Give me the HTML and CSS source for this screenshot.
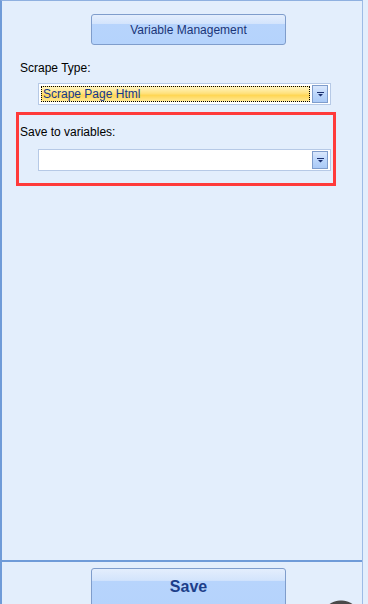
FILE: index.html
```html
<!DOCTYPE html>
<html lang="en">
<head>
  <meta charset="UTF-8" />
  <title>Scrape Settings</title>
  <link rel="stylesheet" href="styles.css">
</head>
<body>
  <div class="panel">
    <div class="content">
      <button class="ribbon-btn var-btn">Variable Management</button>

      <div class="field-label">Scrape Type:</div>
      <div class="combo">
        <div class="combo-value selected"><span>Scrape Page Html</span></div>
        <div class="combo-arrow">
          <svg width="7" height="5" viewBox="0 0 7 5"><path d="M0 0h7v1H0z M1 2h5L3.5 4.5z" fill="#1b2f6e"/></svg>
        </div>
      </div>

      <div class="highlight">
        <div class="field-label">Save to variables:</div>
        <div class="combo">
          <div class="combo-value"></div>
          <div class="combo-arrow">
            <svg width="7" height="5" viewBox="0 0 7 5"><path d="M0 0h7v1H0z M1 2h5L3.5 4.5z" fill="#1b2f6e"/></svg>
          </div>
        </div>
      </div>
    </div>

    <div class="footer">
      <button class="ribbon-btn save-btn">Save</button>
    </div>
  </div>
  <div class="corner-dot"></div>
</body>
</html>
```

FILE: styles.css
```css
* {
  margin: 0;
  padding: 0;
  box-sizing: border-box;
}

body {
  width: 368px;
  height: 604px;
  overflow: hidden;
  background: #e3eefc;
  font-family: "Liberation Sans", Arial, sans-serif;
  position: relative;
}

.panel {
  width: 363px;
  height: 604px;
  display: flex;
  flex-direction: column;
  border-left: 2px solid #6f9bd8;
  border-top: 1px solid #8fb0e0;
  border-right: 1px solid #9dbbe6;
  background: #e3eefc;
}

.content {
  flex: 1;
  padding: 13px 0 0 14px;
}

/* office style buttons */
.ribbon-btn {
  display: block;
  width: 195px;
  border: 1px solid #7f9dcc;
  border-radius: 3px;
  background: linear-gradient(to bottom, #e4eefd 0%, #d3e4fc 30%, #b7d4fc 32%, #b5d3fc 100%);
  color: #1a3578;
  font-family: "Liberation Sans", Arial, sans-serif;
  cursor: pointer;
}

.var-btn {
  margin-left: 75px;
  height: 31px;
  font-size: 12px;
}

.field-label {
  margin: 16px 0 0 4px;
  font-size: 12px;
  line-height: 14px;
  color: #000;
}

.combo {
  display: flex;
  align-items: center;
  flex-shrink: 0;
  width: 293px;
  height: 22px;
  margin: 8px 0 0 22px;
  padding: 2px;
  border: 1px solid #b6c9e6;
  background: #fff;
}

.combo-value {
  flex: 1;
  height: 16px;
  margin-right: 2px;
  font-size: 12px;
  line-height: 14px;
  color: #15388c;
}

.combo-value.selected {
  border: 1px dotted #000;
  background: linear-gradient(to bottom, #fff4c0 0%, #ffe27e 45%, #ffd654 60%, #ffe891 100%);
  padding-left: 1px;
}

.combo-arrow {
  width: 16px;
  height: 18px;
  display: flex;
  align-items: center;
  justify-content: center;
  border: 1px solid #7f9dcc;
  background: linear-gradient(to bottom, #dbe8fc 0%, #bcd6fb 50%, #abcaf7 100%);
}

.highlight {
  width: 320px;
  height: 74px;
  margin-top: 7px;
  border: 3px solid #ff3a3a;
  padding: 10px 0 0 1px;
}

.highlight .field-label {
  margin: 0;
}

.highlight .combo {
  margin: 10px 0 0 18px;
}

.footer {
  height: 44px;
  border-top: 2px solid #6f9bd8;
  padding-top: 6px;
}

.save-btn {
  margin-left: 89px;
  height: 40px;
  padding-bottom: 3px;
  font-size: 16px;
  font-weight: bold;
  color: #1d3f8a;
}

/* edge of a floating round button peeking in at the bottom */
.corner-dot {
  position: absolute;
  left: 320px;
  top: 597px;
  width: 42px;
  height: 7px;
  background: radial-gradient(circle 21px at 21px 24px, #4a4a4a 20px, rgba(74, 74, 74, 0) 21px);
}
```
